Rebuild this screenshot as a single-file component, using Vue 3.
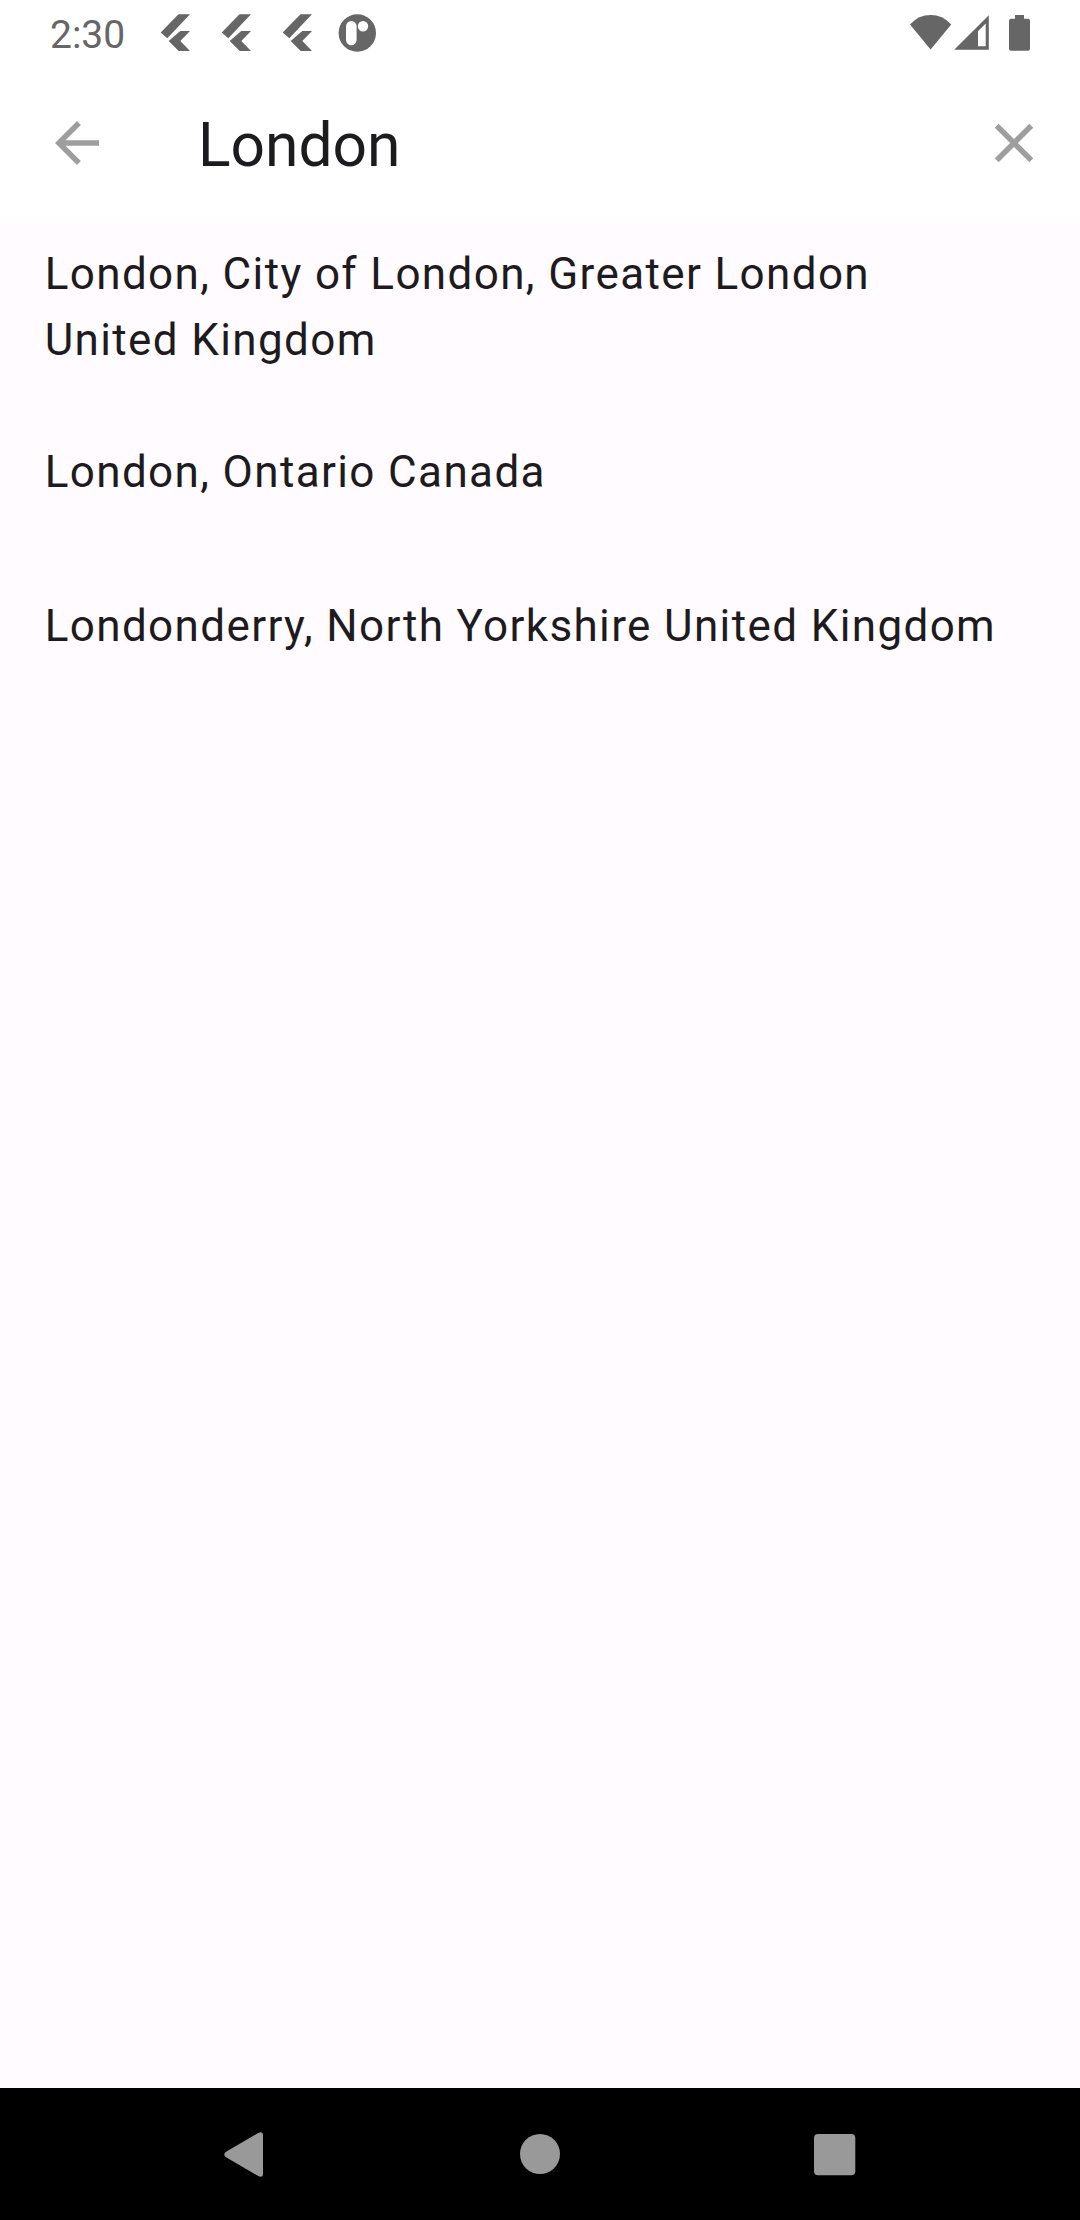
<script setup>
const notifications = [1, 2, 3]
const results = [
  'London, City of London, Greater London United Kingdom',
  'London, Ontario Canada',
  'Londonderry, North Yorkshire United Kingdom',
]
</script>

<template>
  <div class="screen">
    <header class="status">
      <span class="time">2:30</span>
      <div class="notes">
        <svg v-for="n in notifications" :key="n" class="flutter" width="30" height="66" viewBox="160 0 30 66">
          <path d="M178.5 14.3H190L167.3 38.3 160.7 32.6ZM180.3 31H190L180.3 41 190 51H178.7L168.7 41Z" />
        </svg>
        <svg class="badge" width="38" height="66" viewBox="338 0 38 66">
          <path fill-rule="evenodd" d="M338.6 33a18.7 18.7 0 1 0 37.4 0a18.7 18.7 0 1 0-37.4 0ZM346 26.3a5.3 5.3 0 0 1 10.6 0V40a5.3 5.3 0 0 1-10.6 0ZM357.8 26.3a5.2 5.2 0 1 0 10.4 0a5.2 5.2 0 1 0-10.4 0Z" />
        </svg>
      </div>
      <svg class="system" width="122" height="66" viewBox="909 0 122 66">
        <path d="M930.6 49.4 910 24.4Q918.5 15 930.6 15T951.2 24.4Z" />
        <path fill-rule="evenodd" d="M954.2 49.8 988.8 15.2V49.8ZM978 46.2H985.7V23.5L978 31.2Z" />
        <path d="M1015 15H1024V18.8H1028Q1030 18.8 1030 20.8V48.7Q1030 50.7 1028 50.7H1011Q1009 50.7 1009 48.7V20.8Q1009 18.8 1011 18.8H1015Z" />
      </svg>
    </header>

    <div class="appbar">
      <svg class="back" width="66" height="66" viewBox="0 0 24 24">
        <path d="M20 11H7.83l5.59-5.59L12 4l-8 8 8 8 1.41-1.41L7.83 13H20v-2z" />
      </svg>
      <div class="query">London</div>
      <svg class="clear" width="66" height="66" viewBox="0 0 24 24">
        <path d="M19 6.41L17.59 5 12 10.59 6.41 5 5 6.41 10.59 12 5 17.59 6.41 19 12 13.41 17.59 19 19 17.59 13.41 12z" />
      </svg>
    </div>

    <ul class="results">
      <li v-for="place in results" :key="place"><span>{{ place }}</span></li>
    </ul>

    <nav class="navbar">
      <svg width="1080" height="132" viewBox="0 0 1080 132">
        <path d="M225.6 64.1 258.6 44.7Q263 43.3 263 47.2V85.8Q263 89.7 258.6 88.3L225.6 68.9Q223 66.5 225.6 64.1Z" />
        <circle cx="540" cy="66" r="20" />
        <rect x="814" y="46" width="41.3" height="41.3" rx="4" />
      </svg>
    </nav>
  </div>
</template>

<style scoped>
.screen {
  width: 1080px;
  height: 2220px;
  display: flex;
  flex-direction: column;
  background: #fffbff;
  color: #1d1b1e;
  font-family: Roboto, sans-serif;
  overflow: hidden;
}
svg {
  display: block;
  flex: none;
}
.status {
  height: 66px;
  flex: none;
  display: flex;
  background: #fff;
  color: #666;
  fill: #666;
  padding: 0 49px 0 50px;
}
.time {
  font-size: 39px;
  line-height: 70px;
  width: 110px;
}
.notes {
  display: flex;
  flex: 1;
}
.flutter {
  margin-right: 31px;
}
.badge {
  margin-left: -5px;
}
.appbar {
  height: 154px;
  flex: none;
  display: flex;
  align-items: center;
  background: #fff;
  fill: #9e9e9e;
  padding: 0 33px 0 44px;
}
.query {
  flex: 1;
  margin-left: 88px;
  padding-top: 5px;
  font-size: 60.5px;
  line-height: 76px;
  color: #1c1b1d;
}
.results {
  flex: 1;
  margin: 0;
  padding: 0;
  list-style: none;
  font-size: 44px;
  line-height: 66px;
  letter-spacing: 1.375px;
}
.results li {
  min-height: 154px;
  box-sizing: border-box;
  padding: 21px 66px 22px 44.7px;
  display: flex;
  align-items: center;
}
.navbar {
  height: 132px;
  flex: none;
  background: #000;
  fill: #999;
}
</style>

<style>
body {
  margin: 0;
}
</style>
